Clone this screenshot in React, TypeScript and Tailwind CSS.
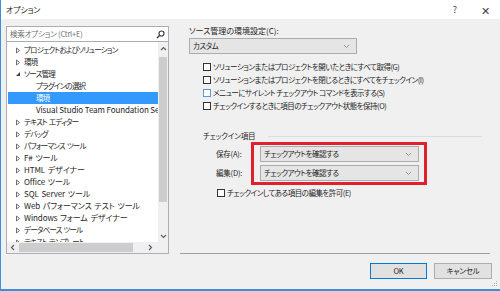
import React from 'react';

type TreeItem = {
  label: string;
  level: number;
  arrow?: 'closed' | 'open';
  selected?: boolean;
};

const tree: TreeItem[] = [
  { label: 'プロジェクトおよびソリューション', level: 0, arrow: 'closed' },
  { label: '環境', level: 0, arrow: 'closed' },
  { label: 'ソース管理', level: 0, arrow: 'open' },
  { label: 'プラグインの選択', level: 1 },
  { label: '環境', level: 1, selected: true },
  { label: 'Visual Studio Team Foundation Server', level: 1 },
  { label: 'テキスト エディター', level: 0, arrow: 'closed' },
  { label: 'デバッグ', level: 0, arrow: 'closed' },
  { label: 'パフォーマンス ツール', level: 0, arrow: 'closed' },
  { label: 'F# ツール', level: 0, arrow: 'closed' },
  { label: 'HTML デザイナー', level: 0, arrow: 'closed' },
  { label: 'Office ツール', level: 0, arrow: 'closed' },
  { label: 'SQL Server ツール', level: 0, arrow: 'closed' },
  { label: 'Web パフォーマンス テスト ツール', level: 0, arrow: 'closed' },
  { label: 'Windows フォーム デザイナー', level: 0, arrow: 'closed' },
  { label: 'データベース ツール', level: 0, arrow: 'closed' },
  { label: 'テキスト テンプレート', level: 0, arrow: 'closed' },
];

const Chevron = ({ dir }: { dir: 'up' | 'down' | 'left' | 'right' }) => {
  const pts = {
    up: '1,4 3.5,1.5 6,4',
    down: '1,2 3.5,4.5 6,2',
    left: '4,1 1.5,3.5 4,6',
    right: '2,1 4.5,3.5 2,6',
  }[dir];
  return (
    <svg width="7" height="7" viewBox="0 0 7 7">
      <polyline points={pts} fill="none" stroke="#606060" strokeWidth="1.2" />
    </svg>
  );
};

const Arrow = ({ open }: { open: boolean }) =>
  open ? (
    <svg width="6" height="6" viewBox="0 0 6 6">
      <polygon points="5,1 5,5 1,5" fill="#404040" />
    </svg>
  ) : (
    <svg width="6" height="7" viewBox="0 0 6 7">
      <polygon points="1.5,1 4.5,3.5 1.5,6" fill="none" stroke="#707070" strokeWidth="1" />
    </svg>
  );

const Combo = ({ text, width }: { text: string; width: string }) => (
  <div className={`${width} h-[16px] border border-[#acacac] bg-[#e5e5e5] flex items-center justify-between pl-[3px] pr-[6px]`}>
    <span>{text}</span>
    <svg width="7" height="5" viewBox="0 0 7 5">
      <polyline points="1,1 3.5,3.5 6,1" fill="none" stroke="#8a8a8a" strokeWidth="0.9" />
    </svg>
  </div>
);

const Check = ({ label, focus }: { label: string; focus?: boolean }) => (
  <div className="h-[13px] flex items-center gap-[2px]">
    <div className={`w-[8px] h-[8px] bg-white border ${focus ? 'border-[#5b9bd5]' : 'border-[#333333]'}`} />
    <span>{label}</span>
  </div>
);

export default function App() {
  return (
    <div className="w-[500px] h-[291px] bg-[#f0f0f0] border-l border-b-2 border-[#3c8fd8] flex flex-col text-[7.5px] tracking-[-0.5px] leading-[12px] text-[#1e1e1e] overflow-hidden font-['Noto_Sans_CJK_JP','Noto_Sans',sans-serif] [font-feature-settings:'palt']">
      {/* title bar */}
      <div className="h-[19px] bg-white flex items-center pl-[5px]">
        <span className="text-[8px] tracking-[-0.2px]">オプション</span>
        <div className="ml-auto flex text-[#404040] tracking-normal">
          <span className="w-[30px] text-center text-[9px]">?</span>
          <span className="w-[30px] text-center text-[11px]">✕</span>
        </div>
      </div>

      <div className="h-[235px] flex">
        {/* left: search + tree */}
        <div className="ml-[5px] w-[163px] flex flex-col pt-[7px]">
          <div className="h-[16px] border border-[#abadb3] bg-white flex items-center pl-[3px] pr-[3px] text-[#707070] tracking-[-0.2px]">
            <span>検索オプション (Ctrl+E)</span>
            <svg className="ml-auto" width="9" height="9" viewBox="0 0 9 9">
              <circle cx="5.5" cy="3.5" r="2.5" fill="none" stroke="#404040" strokeWidth="1.2" />
              <line x1="3.7" y1="5.3" x2="1" y2="8" stroke="#404040" strokeWidth="1.5" />
            </svg>
          </div>
          <div className="h-[212px] border border-t-0 border-[#abadb3] bg-white flex flex-col">
            <div className="flex-1 flex min-h-0">
              <div className="flex-1 overflow-hidden pt-[2px] pl-[1px]">
                {tree.map((t, i) => {
                  const latin = /[A-Za-z]/.test(t.label);
                  return (
                    <div
                      key={i}
                      className={`h-[12px] flex items-center whitespace-nowrap overflow-hidden ${t.selected ? 'bg-[#3399ff] text-white' : ''}`}
                    >
                      {t.level === 0 ? (
                        <>
                          <span className="w-[16px] flex justify-end pr-[3px]">
                            <Arrow open={t.arrow === 'open'} />
                          </span>
                          <span className={latin ? 'text-[8px] tracking-[-0.1px] [word-spacing:1px]' : 'tracking-[-0.8px] [word-spacing:1px]'}>
                            {t.label}
                          </span>
                        </>
                      ) : (
                        <span className={latin ? 'pl-[28px] text-[8px] tracking-[-0.1px]' : 'pl-[28px] tracking-[-0.8px]'}>
                          {t.label}
                        </span>
                      )}
                    </div>
                  );
                })}
              </div>
              <div className="w-[10px] bg-[#f0f0f0] flex flex-col items-center">
                <div className="h-[15px] flex items-center">
                  <Chevron dir="up" />
                </div>
                <div className="w-[8px] h-[145px] bg-[#cdcdcd]" />
                <div className="flex-1" />
                <div className="h-[12px] flex items-center">
                  <Chevron dir="down" />
                </div>
              </div>
            </div>
            <div className="h-[11px] flex bg-[#f0f0f0] items-center">
              <div className="w-[12px] flex justify-center">
                <Chevron dir="left" />
              </div>
              <div className="w-[114px] h-[9px] bg-[#cdcdcd]" />
              <div className="flex-1 flex justify-end pr-[4px]">
                <Chevron dir="right" />
              </div>
              <div className="w-[10px]" />
            </div>
          </div>
        </div>

        {/* right: settings */}
        <div className="ml-[11px] w-[310px] border-b border-[#a0a0a0] flex flex-col pl-[9px] pt-[6px]">
          <div className="h-[12px] flex items-center text-[8px] tracking-[0px]">ソース管理の環境設定(C):</div>
          <div className="mt-[1px]">
            <Combo text="カスタム" width="w-[168px]" />
          </div>
          <div className="mt-[6px] pl-[14px] flex flex-col">
            <Check label="ソリューションまたはプロジェクトを開いたときにすべて取得(G)" />
            <Check label="ソリューションまたはプロジェクトを閉じるときにすべてをチェックイン(I)" />
            <Check label="メニューにサイレント チェックアウト コマンドを表示する(S)" focus />
            <Check label="チェックインするときに項目のチェックアウト状態を保持(O)" />
          </div>

          <div className="mt-[18px] h-[12px] flex items-center pl-[14px]">
            <span className="tracking-[-0.2px]">チェックイン項目</span>
            <div className="flex-1 h-px bg-[#d5dfe5] ml-[13px] mr-[8px]" />
          </div>

          <div className="flex">
            <div className="w-[62px] pl-[27px] pt-[4px] flex flex-col gap-[3px] tracking-[-0.2px]">
              <div className="h-[16px] flex items-center">保存(A):</div>
              <div className="h-[16px] flex items-center">編集(D):</div>
            </div>
            <div className="w-[176px] border-[3px] border-[#e0202a] pl-[6px] pr-[5px] py-[1px] flex flex-col gap-[3px]">
              <Combo text="チェックアウトを確認する" width="w-[159px]" />
              <Combo text="チェックアウトを確認する" width="w-[159px]" />
            </div>
          </div>

          <div className="mt-[1px] pl-[28px]">
            <Check label="チェックインしてある項目の編集を許可(E)" />
          </div>
        </div>
      </div>

      {/* footer */}
      <div className="flex-1 relative flex justify-end items-start pt-[9px] pr-[8px] gap-[7px] tracking-[-0.2px]">
        <button className="w-[57px] h-[16px] bg-[#e1e1e1] border border-[#0078d7] flex items-center justify-center">
          OK
        </button>
        <button className="w-[58px] h-[16px] bg-[#e1e1e1] border border-[#adadad] flex items-center justify-center">
          キャンセル
        </button>
        <svg className="absolute right-[2px] bottom-[2px]" width="6" height="6" viewBox="0 0 6 6">
          <rect x="4" y="0" width="1" height="1" fill="#b0b0b0" />
          <rect x="2" y="2" width="1" height="1" fill="#b0b0b0" />
          <rect x="4" y="2" width="1" height="1" fill="#b0b0b0" />
          <rect x="0" y="4" width="1" height="1" fill="#b0b0b0" />
          <rect x="2" y="4" width="1" height="1" fill="#b0b0b0" />
          <rect x="4" y="4" width="1" height="1" fill="#b0b0b0" />
        </svg>
      </div>
    </div>
  );
}
